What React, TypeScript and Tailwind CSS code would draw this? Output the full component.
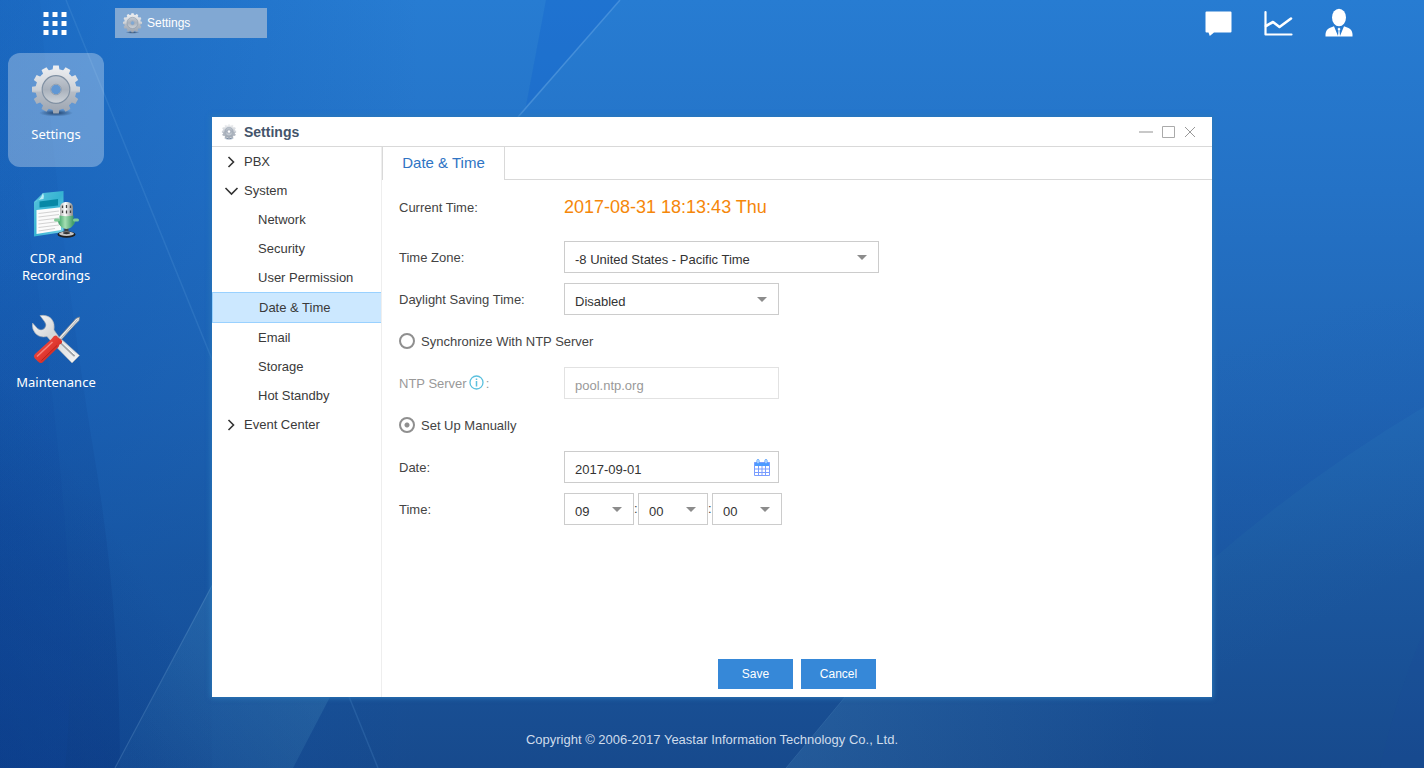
import { useState } from 'react';
import type { ReactNode } from 'react';

const TEETH = [0, 30, 60, 90, 120, 150, 180, 210, 240, 270, 300, 330];

function GearIcon({ id, className }: { id: string; className: string }) {
  return (
    <svg viewBox="0 0 50 52" className={className} aria-hidden="true">
      <defs>
        <linearGradient id={`${id}-body`} x1="0" y1="0" x2="0" y2="50" gradientUnits="userSpaceOnUse">
          <stop offset="0" stopColor="#f0f1f3" />
          <stop offset="0.5" stopColor="#cdd1d7" />
          <stop offset="0.55" stopColor="#b6bcc5" />
          <stop offset="1" stopColor="#9aa3af" />
        </linearGradient>
        <linearGradient id={`${id}-disc`} x1="0" y1="0" x2="0" y2="1">
          <stop offset="0" stopColor="#c3c9d1" />
          <stop offset="0.5" stopColor="#a9b1bc" />
          <stop offset="1" stopColor="#cfd4da" />
        </linearGradient>
        <radialGradient id={`${id}-shade`}>
          <stop offset="0" stopColor="#1c3d66" stopOpacity="0.95" />
          <stop offset="1" stopColor="#1c3d66" stopOpacity="0" />
        </radialGradient>
      </defs>
      <ellipse cx="25" cy="48" rx="17" ry="3.500" fill={`url(#${id}-shade)`} />
      <mask id={`${id}-hole`} maskUnits="userSpaceOnUse" x="0" y="0" width="50" height="52">
        <rect width="50" height="52" fill="#000" />
        <circle cx="25" cy="24.500" r="20.500" fill="#fff" />
        {TEETH.map((a) => (
          <path key={a} d="M21.400 6 22.200.5h5.600L28.600 6z" fill="#fff" transform={`rotate(${a} 25 24.500)`} />
        ))}
        <circle cx="25" cy="24.500" r="5" fill="#000" />
      </mask>
      <rect width="50" height="52" fill={`url(#${id}-body)`} mask={`url(#${id}-hole)`} />
      <g mask={`url(#${id}-hole)`}>
        <circle cx="25" cy="24.500" r="13.800" fill={`url(#${id}-disc)`} stroke="#8191a3" strokeWidth="1.200" />
      </g>
      <circle cx="25" cy="24.500" r="5.300" fill="none" stroke="#8a99ab" strokeWidth="0.800" />
    </svg>
  );
}

function RecordingsIcon() {
  return (
    <svg viewBox="0 0 50 52" className="h-[52px] w-[50px]" aria-hidden="true">
      <defs>
        <linearGradient id="doc" x1="0" y1="0" x2="1" y2="1">
          <stop offset="0" stopColor="#5cc4dd" />
          <stop offset="0.5" stopColor="#35b3d2" />
          <stop offset="1" stopColor="#7ed4e6" />
        </linearGradient>
        <linearGradient id="mic" x1="0" y1="0" x2="1" y2="0">
          <stop offset="0" stopColor="#4fae74" />
          <stop offset="0.4" stopColor="#a5dfb3" />
          <stop offset="1" stopColor="#3f9a66" />
        </linearGradient>
        <linearGradient id="chrome" x1="0" y1="0" x2="1" y2="0">
          <stop offset="0" stopColor="#b5b5b5" />
          <stop offset="0.4" stopColor="#fff" />
          <stop offset="1" stopColor="#8a8a8a" />
        </linearGradient>
      </defs>
      <g transform="translate(0 1)">
        <path d="M12 3 32.500 1 32.500 42 3 46.500 3 12z" fill="url(#doc)" />
        <path d="M3 12 Q9 11 12 3 Q13.500 6 12.500 9 Q8 9 3 12z" fill="#b8edf6" />
        <path d="M8.500 11.500 27 9v6.500L8.500 17.500z" fill="#0788a6" />
        <path d="M5.500 20 30 17.200V40L5.500 44z" fill="#fbfbfb" />
        <path d="M7.500 23.500 28 21M7.500 27 28 24.500M7.500 30.500 28 28M7.500 34 28 31.500M7.500 37.500 28 35M7.500 41 24 38.500" stroke="#d2d2d2" strokeWidth="1.200" />
        <path d="M33.500 37h4v7h-4z" fill="#444" />
        <ellipse cx="35.500" cy="44.500" rx="9" ry="3.300" fill="#1f1f1f" />
        <ellipse cx="35.500" cy="43.700" rx="7.500" ry="2.200" fill="#c4c4c4" />
        <ellipse cx="35.500" cy="43.100" rx="3.500" ry="1.100" fill="#333" />
        <rect x="29" y="12" width="13" height="20" rx="5.500" fill="url(#chrome)" />
        <path d="M31.500 15.500v2.500M35.500 15v3M39.500 15.500v2.500M31.500 20.500v2.500M35.500 20.500v3M39.500 20.500v2.500" stroke="#444" strokeWidth="1.300" />
        <path d="M26.500 30.500Q28 37.500 35.500 38Q43 37.500 44.500 30.500z" fill="#49a56f" />
        <path d="M28.500 25.500Q35.500 27 42.500 25.500V34Q41 38.500 35.500 39Q30 38.500 28.500 34z" fill="url(#mic)" />
        <rect x="23" y="28.500" width="6" height="3" rx="1.500" fill="#7fcb98" />
        <rect x="42" y="28.500" width="6" height="3" rx="1.500" fill="#7fcb98" />
      </g>
    </svg>
  );
}

function ToolsIcon() {
  return (
    <svg viewBox="0 0 50 52" className="h-[52px] w-[50px]" aria-hidden="true">
      <defs>
        <linearGradient id="steel" x1="0" y1="0" x2="1" y2="1">
          <stop offset="0" stopColor="#fafafa" />
          <stop offset="0.4" stopColor="#d4d6d8" />
          <stop offset="1" stopColor="#f5f5f5" />
        </linearGradient>
        <linearGradient id="grip" x1="0" y1="0" x2="1" y2="1">
          <stop offset="0" stopColor="#f0524a" />
          <stop offset="0.5" stopColor="#e23a31" />
          <stop offset="1" stopColor="#b81e18" />
        </linearGradient>
      </defs>
      <g transform="translate(0 1)">
        <path
          d="M9 1.500Q17 .5 21 5.500Q24 9.500 23 16L28 23 48.500 41.500 41 49 21 28.500 16 22.500Q9 24 5 20Q.5 15.500 1.500 9L6.500 14.500Q10 17.500 13.500 14.500Q16.500 11 13.500 7.500z"
          fill="url(#steel)"
          stroke="#a9adb1"
          strokeWidth="0.600"
        />
        <path d="M30 29 43 41.500" stroke="#9ea2a6" strokeWidth="2" strokeLinecap="round" />
        <path d="M31 28.500 43.500 40.500" stroke="#fff" strokeWidth="1" />
        <path d="M45 4.500 48.500 3 48 6.500 44 10.500 29.500 26.500 27 24.500 41.500 8.500z" fill="#ececec" stroke="#85898d" strokeWidth="0.800" />
        <path d="M46.500 5.500 29 25.500" stroke="#a5a8ab" strokeWidth="0.900" />
        <path d="M23 22Q26 20.500 27 23.500Q30 24.500 31 27Q31.500 29.500 28.500 30.500L27.500 33 11.500 48.500Q9.500 50 7 47.500L3.500 44Q2 42 4 40L20 25.500z" fill="url(#grip)" />
        <path d="M21.500 28 6 42.500" stroke="#f7857c" strokeWidth="1.500" />
        <path d="M26 31.500 10.500 46.500" stroke="#b7221b" strokeWidth="1" />
      </g>
    </svg>
  );
}

function Wallpaper() {
  return (
    <svg viewBox="0 0 1424 768" preserveAspectRatio="none" className="absolute inset-0 h-full w-full" aria-hidden="true">
      <defs>
        <linearGradient id="sky" x1="0" y1="0" x2="0" y2="1">
          <stop offset="0" stopColor="#277cd2" />
          <stop offset="0.250" stopColor="#2472c6" />
          <stop offset="0.520" stopColor="#2065b4" />
          <stop offset="0.750" stopColor="#1b579f" />
          <stop offset="1" stopColor="#174a8d" />
        </linearGradient>
        <linearGradient id="left-dark" x1="0" y1="0" x2="420" y2="0" gradientUnits="userSpaceOnUse">
          <stop offset="0" stopColor="#0a50ac" stopOpacity="0.380" />
          <stop offset="1" stopColor="#0a50ac" stopOpacity="0" />
        </linearGradient>
        <linearGradient id="corner" x1="0" y1="250" x2="0" y2="768" gradientUnits="userSpaceOnUse">
          <stop offset="0" stopColor="#0a3c8c" stopOpacity="0.050" />
          <stop offset="1" stopColor="#08317a" stopOpacity="0.280" />
        </linearGradient>
        <linearGradient id="low-left" x1="0" y1="768" x2="190" y2="640" gradientUnits="userSpaceOnUse">
          <stop offset="0" stopColor="#08317a" stopOpacity="0.350" />
          <stop offset="1" stopColor="#08317a" stopOpacity="0" />
        </linearGradient>
        <linearGradient id="facet" x1="0" y1="140" x2="0" y2="600" gradientUnits="userSpaceOnUse">
          <stop offset="0" stopColor="#0e4aa0" stopOpacity="0" />
          <stop offset="1" stopColor="#0e4498" stopOpacity="0.250" />
        </linearGradient>
        <linearGradient id="wedge" x1="300" y1="620" x2="150" y2="768" gradientUnits="userSpaceOnUse">
          <stop offset="0" stopColor="#54a0c8" stopOpacity="0.240" />
          <stop offset="1" stopColor="#54a0c8" stopOpacity="0.060" />
        </linearGradient>
        <linearGradient id="bottom-light" x1="800" y1="0" x2="1160" y2="0" gradientUnits="userSpaceOnUse">
          <stop offset="0" stopColor="#5a9cc8" stopOpacity="0.180" />
          <stop offset="1" stopColor="#5a9cc8" stopOpacity="0" />
        </linearGradient>
        <linearGradient id="right-light" x1="1290" y1="450" x2="1370" y2="600" gradientUnits="userSpaceOnUse">
          <stop offset="0" stopColor="#2f8fc0" stopOpacity="0.080" />
          <stop offset="1" stopColor="#2f8fc0" stopOpacity="0" />
        </linearGradient>
        <linearGradient id="right-shade" x1="1290" y1="320" x2="1340" y2="470" gradientUnits="userSpaceOnUse">
          <stop offset="0" stopColor="#1552ac" stopOpacity="0" />
          <stop offset="1" stopColor="#1552ac" stopOpacity="0.150" />
        </linearGradient>
      </defs>
      <rect width="1424" height="768" fill="url(#sky)" />
      <rect width="420" height="768" fill="url(#left-dark)" />
      <rect y="380" width="212" height="388" fill="url(#low-left)" />
      <path d="M0 0H40Q60 250 95 460Q120 610 120 768H0z" fill="url(#corner)" />
      <path d="M0 140 14 140Q60 400 70 600Q72 700 65 768H0z" fill="url(#facet)" />
      <path d="M546 0 526 106 620 0z" fill="#0f60cc" fillOpacity="0.320" />
      <path d="M620 0 518 117" stroke="#7fb8ee" strokeOpacity="0.350" strokeWidth="1.500" />
      <path d="M66 0 378 768" stroke="#6fb0e8" strokeOpacity="0.170" strokeWidth="1.500" />
      <path d="M212 585 116 768H293L330 697 400 500z" fill="url(#wedge)" />
      <path d="M215 580 115 768" stroke="#7fb3dd" strokeOpacity="0.250" strokeWidth="1.200" />
      <path d="M845 697 786 768H1160V697z" fill="url(#bottom-light)" />
      <path d="M845 697 786 768" stroke="#7fb3dd" strokeOpacity="0.150" />
      <path d="M1212 300H1424V407Q1310 475 1212 560z" fill="url(#right-shade)" />
      <path d="M1212 560Q1310 475 1424 407V768H1212z" fill="url(#right-light)" />
      <path d="M1424 630Q1395 700 1380 768H1424z" fill="#1d4a9a" fillOpacity="0.150" />
    </svg>
  );
}

function DesktopIcon({ label, active, children }: { label: ReactNode; active?: boolean; children: ReactNode }) {
  return (
    <button
      type="button"
      className={`flex h-[114px] w-24 flex-col items-center gap-[9px] rounded-xl pt-3 font-['Noto_Sans','Open_Sans',sans-serif] text-[13px] leading-[17px] text-white ${
        active ? 'bg-white/30' : ''
      }`}
    >
      {children}
      <span>{label}</span>
    </button>
  );
}

function Caret() {
  return (
    <svg viewBox="0 0 10 5" className="pointer-events-none absolute top-[14px] right-3 h-[5px] w-[10px]" aria-hidden="true">
      <path d="M0 0h10L5 5z" fill="#8c8c8c" />
    </svg>
  );
}

function SelectBox({ id, label, options, width }: { id: string; label?: string; options: string[]; width: string }) {
  return (
    <div className={`relative h-8 ${width}`}>
      <select
        id={id}
        aria-label={label}
        className="h-full w-full appearance-none rounded-none border border-[#ccc] bg-white pt-[6px] pr-6 pl-[10px] text-[13px] text-[#333] outline-none"
      >
        {options.map((o) => (
          <option key={o}>{o}</option>
        ))}
      </select>
      <Caret />
    </div>
  );
}

function Row({ id, label, children, muted }: { id?: string; label: ReactNode; children: ReactNode; muted?: boolean }) {
  return (
    <div className="flex h-8 items-center">
      <label htmlFor={id} className={`w-[165px] shrink-0 pt-[2px] ${muted ? 'text-[#999]' : ''}`}>
        {label}
      </label>
      {children}
    </div>
  );
}

function RadioRow({ label, checked, onChange }: { label: string; checked: boolean; onChange: () => void }) {
  return (
    <label className="flex h-8 items-center gap-[6px]">
      <input
        type="radio"
        name="clock-source"
        checked={checked}
        onChange={onChange}
        className="h-4 w-4 appearance-none rounded-full border-2 border-[#8f8f8f] bg-white checked:bg-[radial-gradient(circle,#8f8f8f_0_2px,#fff_3px)]"
      />
      <span className="pt-[2px]">{label}</span>
    </label>
  );
}

function CalendarIcon() {
  return (
    <svg viewBox="0 0 16 17" className="h-[17px] w-4" aria-hidden="true">
      <path d="M.5 3h15v4H.5z" fill="#4b9bff" />
      <path d="M.5 3.500h15v13H.5zM.5 10h15M.5 13.500h15M4.500 7v9.500M8 7v9.500M11.500 7v9.500" fill="none" stroke="#7a9dff" />
      <rect x="3" y="0.500" width="2" height="4" rx="1" fill="#fff" stroke="#4b9bff" />
      <rect x="11" y="0.500" width="2" height="4" rx="1" fill="#fff" stroke="#4b9bff" />
    </svg>
  );
}

const SYSTEM_ITEMS = ['Network', 'Security', 'User Permission', 'Date & Time', 'Email', 'Storage', 'Hot Standby'];

function Group({ label, open }: { label: string; open?: boolean }) {
  return (
    <button type="button" className="flex h-[29px] w-full items-center gap-[5px] pl-3 text-left">
      <svg viewBox="0 0 15 14" className="h-[14px] w-[15px]" fill="none" stroke="#333" strokeWidth="1.600" aria-hidden="true">
        <path d={open ? 'M1.500 4l6 6 6-6' : 'M4.500 2l5 5-5 5'} />
      </svg>
      {label}
    </button>
  );
}

function Sidebar() {
  return (
    <nav className="w-[170px] shrink-0 border-r border-[#eee] text-[#3a3a3a]">
      <Group label="PBX" />
      <Group label="System" open />
      {SYSTEM_ITEMS.map((item) => {
        const selected = item === 'Date & Time';
        return (
          <a
            key={item}
            href="#"
            className={`flex items-center ${
              selected ? 'h-[31px] border border-r-0 border-[#99d1ff] bg-[#cce8ff] pl-[46px]' : 'h-[29px] pl-[46px]'
            }`}
          >
            {item}
          </a>
        );
      })}
      <Group label="Event Center" />
    </nav>
  );
}

function DateTimeForm() {
  const [manual, setManual] = useState(true);
  return (
    <form className="flex grow flex-col px-[17px] pb-2 text-[#444]" onSubmit={(e) => e.preventDefault()}>
      <div className="flex flex-col gap-[10px] pt-[11px]">
        <div className="mb-2 flex h-8 items-center">
          <span className="w-[165px] shrink-0 pt-[2px]">Current Time:</span>
          <output className="text-[18px] text-[#f5870a]">2017-08-31 18:13:43 Thu</output>
        </div>
        <Row id="zone" label="Time Zone:">
          <SelectBox id="zone" width="w-[315px]" options={['-8 United States - Pacific Time', '-7 United States - Mountain Time']} />
        </Row>
        <Row id="dst" label="Daylight Saving Time:">
          <SelectBox id="dst" width="w-[215px]" options={['Disabled', 'Enabled']} />
        </Row>
        <RadioRow label="Synchronize With NTP Server" checked={!manual} onChange={() => setManual(false)} />
        <Row
          id="ntp"
          muted
          label={
            <span className="flex items-center">
              NTP Server
              <svg viewBox="0 0 15 15" className="mx-[2px] mb-1 h-[15px] w-[15px]" fill="none" stroke="#5bc0de" aria-hidden="true">
                <circle cx="7.500" cy="7.500" r="6.500" strokeWidth="1.300" />
                <path d="M7.500 3.500v1.500M7.500 6v5.500" strokeWidth="1.500" />
              </svg>
              :
            </span>
          }
        >
          <input
            id="ntp"
            defaultValue="pool.ntp.org"
            disabled={manual}
            className="h-8 w-[215px] border border-[#ccc] bg-white px-[10px] pt-1 text-[#333] disabled:border-[#e2e2e2] disabled:text-[#999]"
          />
        </Row>
        <RadioRow label="Set Up Manually" checked={manual} onChange={() => setManual(true)} />
        <Row id="date" label="Date:">
          <div className="flex h-8 w-[215px] items-center border border-[#ccc] pr-2">
            <input id="date" defaultValue="2017-09-01" className="h-full min-w-0 grow px-[10px] pt-1 text-[#333] outline-none" />
            <button type="button" aria-label="Pick a date">
              <CalendarIcon />
            </button>
          </div>
        </Row>
        <Row id="hour" label="Time:">
          <SelectBox id="hour" width="w-[70px]" options={['09', '10', '11']} />
          <span className="w-1">:</span>
          <SelectBox id="minute" label="Minute" width="w-[70px]" options={['00', '15', '30']} />
          <span className="w-1">:</span>
          <SelectBox id="second" label="Second" width="w-[70px]" options={['00', '15', '30']} />
        </Row>
      </div>
      <div className="mt-auto flex justify-center gap-2 text-xs text-white">
        <button type="submit" className="h-[30px] w-[75px] bg-[#3688d8]">
          Save
        </button>
        <button type="button" className="h-[30px] w-[75px] bg-[#3688d8]">
          Cancel
        </button>
      </div>
    </form>
  );
}

function SettingsWindow() {
  return (
    <section className="mt-16 flex min-h-[580px] flex-col bg-white text-[13px] shadow-[0_0_5px_1px_#2a78b8]">
      <header className="flex h-[30px] items-center border-b border-[#d9d9d9] pr-4 pl-[9px]">
        <GearIcon id="gear-title" className="h-4 w-4" />
        <h1 className="ml-[7px] text-sm font-bold text-[#44546b]">Settings</h1>
        <div className="ml-auto flex items-center gap-[9px]">
          <button type="button" aria-label="Minimize">
            <svg viewBox="0 0 14 12" className="h-3 w-[14px]" aria-hidden="true">
              <path d="M0 6h14" stroke="#b0b0b0" strokeWidth="1.400" />
            </svg>
          </button>
          <button type="button" aria-label="Maximize">
            <svg viewBox="0 0 13 12" className="h-3 w-[13px]" aria-hidden="true">
              <path d="M.5.5h12v11H.5z" fill="none" stroke="#aaa" />
            </svg>
          </button>
          <button type="button" aria-label="Close">
            <svg viewBox="0 0 12 12" className="h-3 w-3" aria-hidden="true">
              <path d="M1 1l10 10M11 1 1 11" stroke="#999" />
            </svg>
          </button>
        </div>
      </header>
      <div className="flex grow">
        <Sidebar />
        <div className="flex min-w-0 grow flex-col">
          <div className="flex h-[33px]" role="tablist">
            <button
              type="button"
              role="tab"
              aria-selected="true"
              className="w-[123px] border-x border-[#d9d9d9] text-center text-[15px] text-[#2f74c4]"
            >
              Date &amp; Time
            </button>
            <div className="grow border-b border-[#d9d9d9]" />
          </div>
          <DateTimeForm />
        </div>
      </div>
    </section>
  );
}

export default function App() {
  return (
    <div className="relative flex min-h-screen flex-col overflow-hidden bg-[#1f68bb] font-['Liberation_Sans',Arial,sans-serif]">
      <Wallpaper />
      <header className="relative flex h-[53px] items-start pt-2 pr-[71px] pl-[43px] text-white">
        <button type="button" aria-label="Main menu" className="pt-1">
          <svg viewBox="0 0 24 23" className="h-[23px] w-6" fill="currentColor" aria-hidden="true">
            <path d="M.5 0h5v5h-5zM9.500 0h5v5h-5zM18.500 0h5v5h-5zM.5 9h5v5h-5zM9.500 9h5v5h-5zM18.500 9h5v5h-5zM.5 18h5v5h-5zM9.500 18h5v5h-5zM18.500 18h5v5h-5z" />
          </svg>
        </button>
        <button type="button" className="ml-12 flex h-[30px] w-[152px] items-center gap-1 bg-[#81a8d3] pl-[7px] text-xs">
          <GearIcon id="gear-task" className="h-[21px] w-[21px]" />
          Settings
        </button>
        <nav className="ml-auto flex items-center gap-8">
          <button type="button" aria-label="Messages">
            <svg viewBox="0 0 27 26" className="h-[26px] w-[27px]" fill="currentColor" aria-hidden="true">
              <path d="M1.500 1.500h24q1 0 1 1v19q0 1-1 1H9L4.800 26 3.500 22.500h-2q-1 0-1-1v-19q0-1 1-1z" />
            </svg>
          </button>
          <button type="button" aria-label="Resource monitor">
            <svg viewBox="0 0 29 26" className="h-[26px] w-[29px]" fill="none" stroke="currentColor" aria-hidden="true">
              <path d="M1.500 2v22.500H27.500" strokeWidth="2.200" strokeLinecap="round" strokeLinejoin="round" />
              <path d="M2 16 9 12l6.500 5L27 8.500" strokeWidth="2.600" strokeLinejoin="round" strokeLinecap="round" />
            </svg>
          </button>
          <button type="button" aria-label="Account">
            <svg viewBox="0 0 28 29" className="h-[29px] w-7" fill="currentColor" aria-hidden="true">
              <ellipse cx="14" cy="9.500" rx="7" ry="8.800" />
              <path d="M.5 28.500V26q.5-4.500 4-6l4.500-1.700 4 9.700.5-5.500-1-1.500 1.500-1.500 1.500 1.500-1 1.500.5 5.500 4-9.700 4.500 1.700q3.500 1.500 4 6v2.500z" />
            </svg>
          </button>
        </nav>
      </header>
      <main className="relative grid grow grid-cols-[minmax(104px,1fr)_minmax(0,1000px)_minmax(0,1fr)] items-start">
        <aside className="flex flex-col gap-[10px] pl-2">
          <DesktopIcon label="Settings" active>
            <GearIcon id="gear-desk" className="h-[52px] w-[50px]" />
          </DesktopIcon>
          <DesktopIcon
            label={
              <>
                CDR and
                <br />
                Recordings
              </>
            }
          >
            <RecordingsIcon />
          </DesktopIcon>
          <DesktopIcon label="Maintenance">
            <ToolsIcon />
          </DesktopIcon>
        </aside>
        <SettingsWindow />
      </main>
      <footer className="relative pt-8 pb-[17px] text-center text-[13px] leading-[22px] text-[#cfdceb]">
        Copyright © 2006-2017 Yeastar Information Technology Co., Ltd.
      </footer>
    </div>
  );
}
